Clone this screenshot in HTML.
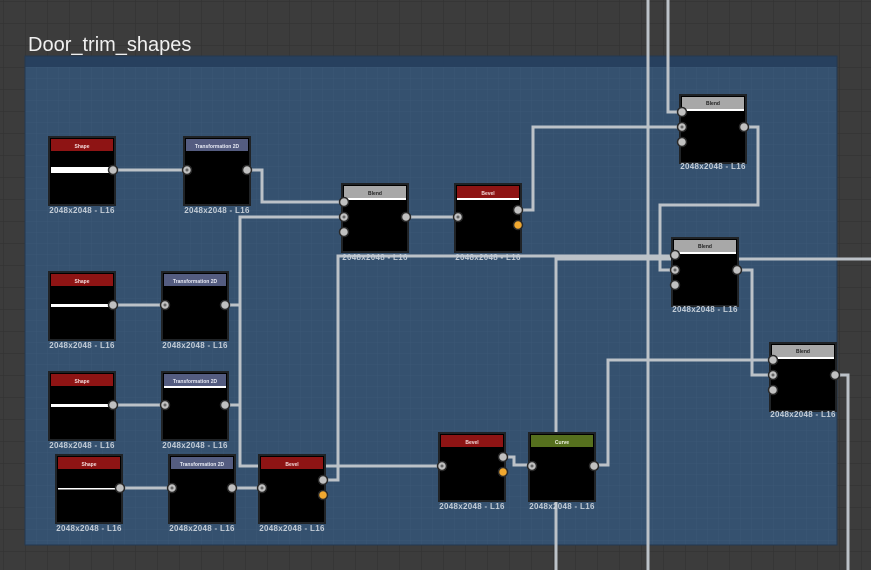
<!DOCTYPE html>
<html><head><meta charset="utf-8"><style>
html,body{margin:0;padding:0;background:#3b3b3b;overflow:hidden}
svg{display:block}
.t{font-family:"Liberation Sans",sans-serif;font-size:5px;font-weight:bold;text-anchor:middle}
.l{font-family:"Liberation Sans",sans-serif;font-size:8px;font-weight:bold;fill:#c3ccd6;text-anchor:middle;letter-spacing:0.3px}
.w{fill:none;stroke:#bcc2c8;stroke-width:3}
</style></head><body>
<svg width="871" height="570" viewBox="0 0 871 570" xmlns="http://www.w3.org/2000/svg">
<defs>
<pattern id="g1" width="22" height="22" patternUnits="userSpaceOnUse" x="3" y="1">
<rect width="22" height="22" fill="#3c3c3c"/><path d="M0 0H22M0 0V22" stroke="#333" stroke-width="1.5"/></pattern>
<pattern id="g2" width="11" height="11" patternUnits="userSpaceOnUse" x="3" y="1">
<rect width="11" height="11" fill="#35516f"/><path d="M0 0H11M0 0V11" stroke="#3b5775" stroke-width="1"/></pattern>
</defs>
<rect width="871" height="570" fill="url(#g1)"/>
<text x="28" y="51" font-family="Liberation Sans,sans-serif" font-size="20" fill="#f0f0f0">Door_trim_shapes</text>
<rect x="25" y="56" width="812" height="489" fill="url(#g2)"/>
<rect x="25" y="56" width="812" height="11" fill="#27405e"/>
<rect x="25" y="56" width="812" height="489" fill="none" stroke="#24384f" stroke-width="1"/>

<g class="w">
<path d="M113 170H187"/>
<path d="M247 170H262V202H344"/>
<path d="M225 305H240V217H344"/>
<path d="M225 405H240"/>
<path d="M240 300V466H442"/>
<path d="M113 305H165"/>
<path d="M113 405H165"/>
<path d="M120 488H172"/>
<path d="M232 488H262"/>
<path d="M323 480H338V256H675"/>
<path d="M408 217H458"/>
<path d="M517 210H533V127H682"/>
<path d="M668 0V112H682"/>
<path d="M648 0V570"/>
<path d="M743 127H758V205H660V270H675"/>
<path d="M556 570V259H871"/>
<path d="M736 270H752V375H773"/>
<path d="M503 457H514V465H532"/>
<path d="M593 465H608V360H773"/>
<path d="M834 375H848V570"/>
</g>

<g>
<rect x="48" y="136" width="68" height="70" fill="#202326"/><rect x="50" y="138" width="64" height="66" fill="#000"/>
<rect x="51" y="139" width="62" height="12" fill="#8e1414"/><text class="t" x="82" y="148" fill="#f3dada">Shape</text>
<rect x="51" y="167" width="60" height="6" fill="#fff"/>
<text class="l" x="82" y="213">2048x2048 - L16</text>
</g>
<g>
<rect x="183" y="136" width="68" height="70" fill="#202326"/><rect x="185" y="138" width="64" height="66" fill="#000"/>
<rect x="186" y="139" width="62" height="12" fill="#545c80"/><text class="t" x="217" y="148" fill="#e6e8f2">Transformation 2D</text>
<text class="l" x="217" y="213">2048x2048 - L16</text>
</g>
<g>
<rect x="48" y="271" width="68" height="70" fill="#202326"/><rect x="50" y="273" width="64" height="66" fill="#000"/>
<rect x="51" y="274" width="62" height="12" fill="#8e1414"/><text class="t" x="82" y="283" fill="#f3dada">Shape</text>
<rect x="51" y="304" width="60" height="3" fill="#fff"/>
<text class="l" x="82" y="348">2048x2048 - L16</text>
</g>
<g>
<rect x="161" y="271" width="68" height="70" fill="#202326"/><rect x="163" y="273" width="64" height="66" fill="#000"/>
<rect x="164" y="274" width="62" height="12" fill="#545c80"/><text class="t" x="195" y="283" fill="#e6e8f2">Transformation 2D</text>
<text class="l" x="195" y="348">2048x2048 - L16</text>
</g>
<g>
<rect x="48" y="371" width="68" height="70" fill="#202326"/><rect x="50" y="373" width="64" height="66" fill="#000"/>
<rect x="51" y="374" width="62" height="12" fill="#8e1414"/><text class="t" x="82" y="383" fill="#f3dada">Shape</text>
<rect x="51" y="404" width="60" height="3" fill="#fff"/>
<text class="l" x="82" y="448">2048x2048 - L16</text>
</g>
<g>
<rect x="161" y="371" width="68" height="70" fill="#202326"/><rect x="163" y="373" width="64" height="66" fill="#000"/>
<rect x="164" y="374" width="62" height="12" fill="#545c80"/><text class="t" x="195" y="383" fill="#e6e8f2">Transformation 2D</text>
<rect x="164" y="386" width="62" height="2" fill="#fff"/>
<text class="l" x="195" y="448">2048x2048 - L16</text>
</g>
<g>
<rect x="55" y="454" width="68" height="70" fill="#202326"/><rect x="57" y="456" width="64" height="66" fill="#000"/>
<rect x="58" y="457" width="62" height="12" fill="#8e1414"/><text class="t" x="89" y="466" fill="#f3dada">Shape</text>
<rect x="58" y="488" width="58" height="1.5" fill="#fff"/>
<text class="l" x="89" y="531">2048x2048 - L16</text>
</g>
<g>
<rect x="168" y="454" width="68" height="70" fill="#202326"/><rect x="170" y="456" width="64" height="66" fill="#000"/>
<rect x="171" y="457" width="62" height="12" fill="#545c80"/><text class="t" x="202" y="466" fill="#e6e8f2">Transformation 2D</text>
<text class="l" x="202" y="531">2048x2048 - L16</text>
</g>
<g>
<rect x="258" y="454" width="68" height="70" fill="#202326"/><rect x="260" y="456" width="64" height="66" fill="#000"/>
<rect x="261" y="457" width="62" height="12" fill="#8e1414"/><text class="t" x="292" y="466" fill="#f3dada">Bevel</text>
<text class="l" x="292" y="531">2048x2048 - L16</text>
</g>
<g>
<rect x="341" y="183" width="68" height="70" fill="#202326"/><rect x="343" y="185" width="64" height="66" fill="#000"/>
<rect x="344" y="186" width="62" height="12" fill="#a8a8a8"/><text class="t" x="375" y="195" fill="#222">Blend</text>
<rect x="344" y="198" width="62" height="2" fill="#fff"/>
<text class="l" x="375" y="260">2048x2048 - L16</text>
</g>
<g>
<rect x="454" y="183" width="68" height="70" fill="#202326"/><rect x="456" y="185" width="64" height="66" fill="#000"/>
<rect x="457" y="186" width="62" height="12" fill="#8e1414"/><text class="t" x="488" y="195" fill="#f3dada">Bevel</text>
<rect x="457" y="198" width="62" height="2" fill="#fff"/>
<text class="l" x="488" y="260">2048x2048 - L16</text>
</g>
<g>
<rect x="438" y="432" width="68" height="70" fill="#202326"/><rect x="440" y="434" width="64" height="66" fill="#000"/>
<rect x="441" y="435" width="62" height="12" fill="#8e1414"/><text class="t" x="472" y="444" fill="#f3dada">Bevel</text>
<text class="l" x="472" y="509">2048x2048 - L16</text>
</g>
<g>
<rect x="528" y="432" width="68" height="70" fill="#202326"/><rect x="530" y="434" width="64" height="66" fill="#000"/>
<rect x="531" y="435" width="62" height="12" fill="#56701e"/><text class="t" x="562" y="444" fill="#eef2e0">Curve</text>
<text class="l" x="562" y="509">2048x2048 - L16</text>
</g>
<g>
<rect x="679" y="94" width="68" height="70" fill="#202326"/><rect x="681" y="96" width="64" height="66" fill="#000"/>
<rect x="682" y="97" width="62" height="12" fill="#a8a8a8"/><text class="t" x="713" y="105" fill="#222">Blend</text>
<rect x="682" y="109" width="62" height="2" fill="#fff"/>
<text class="l" x="713" y="169">2048x2048 - L16</text>
</g>
<g>
<rect x="671" y="237" width="68" height="70" fill="#202326"/><rect x="673" y="239" width="64" height="66" fill="#000"/>
<rect x="674" y="240" width="62" height="12" fill="#a8a8a8"/><text class="t" x="705" y="248" fill="#222">Blend</text>
<rect x="674" y="252" width="62" height="2" fill="#fff"/>
<text class="l" x="705" y="312">2048x2048 - L16</text>
</g>
<g>
<rect x="769" y="342" width="68" height="70" fill="#202326"/><rect x="771" y="344" width="64" height="66" fill="#000"/>
<rect x="772" y="345" width="62" height="12" fill="#a8a8a8"/><text class="t" x="803" y="353" fill="#222">Blend</text>
<rect x="772" y="357" width="62" height="2" fill="#fff"/>
<text class="l" x="803" y="417">2048x2048 - L16</text>
</g>

<g fill="#c0c0c0" stroke="#2a2a2a" stroke-width="1.5">
<circle cx="113" cy="170" r="4.5"/><circle cx="187" cy="170" r="4.5"/><circle cx="247" cy="170" r="4.5"/>
<circle cx="113" cy="305" r="4.5"/><circle cx="165" cy="305" r="4.5"/><circle cx="225" cy="305" r="4.5"/>
<circle cx="113" cy="405" r="4.5"/><circle cx="165" cy="405" r="4.5"/><circle cx="225" cy="405" r="4.5"/>
<circle cx="120" cy="488" r="4.5"/><circle cx="172" cy="488" r="4.5"/><circle cx="232" cy="488" r="4.5"/>
<circle cx="262" cy="488" r="4.5"/><circle cx="323" cy="480" r="4.5"/>
<circle cx="344" cy="202" r="4.5"/><circle cx="344" cy="217" r="4.5"/><circle cx="344" cy="232" r="4.5"/><circle cx="406" cy="217" r="4.5"/>
<circle cx="458" cy="217" r="4.5"/><circle cx="518" cy="210" r="4.5"/>
<circle cx="442" cy="466" r="4.5"/><circle cx="503" cy="457" r="4.5"/>
<circle cx="532" cy="466" r="4.5"/><circle cx="594" cy="466" r="4.5"/>
<circle cx="682" cy="112" r="4.5"/><circle cx="682" cy="127" r="4.5"/><circle cx="682" cy="142" r="4.5"/><circle cx="744" cy="127" r="4.5"/>
<circle cx="675" cy="255" r="4.5"/><circle cx="675" cy="270" r="4.5"/><circle cx="675" cy="285" r="4.5"/><circle cx="737" cy="270" r="4.5"/>
<circle cx="773" cy="360" r="4.5"/><circle cx="773" cy="375" r="4.5"/><circle cx="773" cy="390" r="4.5"/><circle cx="835" cy="375" r="4.5"/>
</g>
<g fill="#f0a830" stroke="#2a2a2a" stroke-width="1.5">
<circle cx="518" cy="225" r="4.5"/><circle cx="323" cy="495" r="4.5"/><circle cx="503" cy="472" r="4.5"/>
</g>
<g fill="#666">
<circle cx="187" cy="170" r="1.5"/><circle cx="165" cy="305" r="1.5"/><circle cx="165" cy="405" r="1.5"/><circle cx="172" cy="488" r="1.5"/>
<circle cx="262" cy="488" r="1.5"/><circle cx="344" cy="217" r="1.5"/><circle cx="458" cy="217" r="1.5"/><circle cx="442" cy="466" r="1.5"/>
<circle cx="532" cy="466" r="1.5"/><circle cx="682" cy="127" r="1.5"/><circle cx="675" cy="270" r="1.5"/><circle cx="773" cy="375" r="1.5"/>
</g>
</svg>
</body></html>
